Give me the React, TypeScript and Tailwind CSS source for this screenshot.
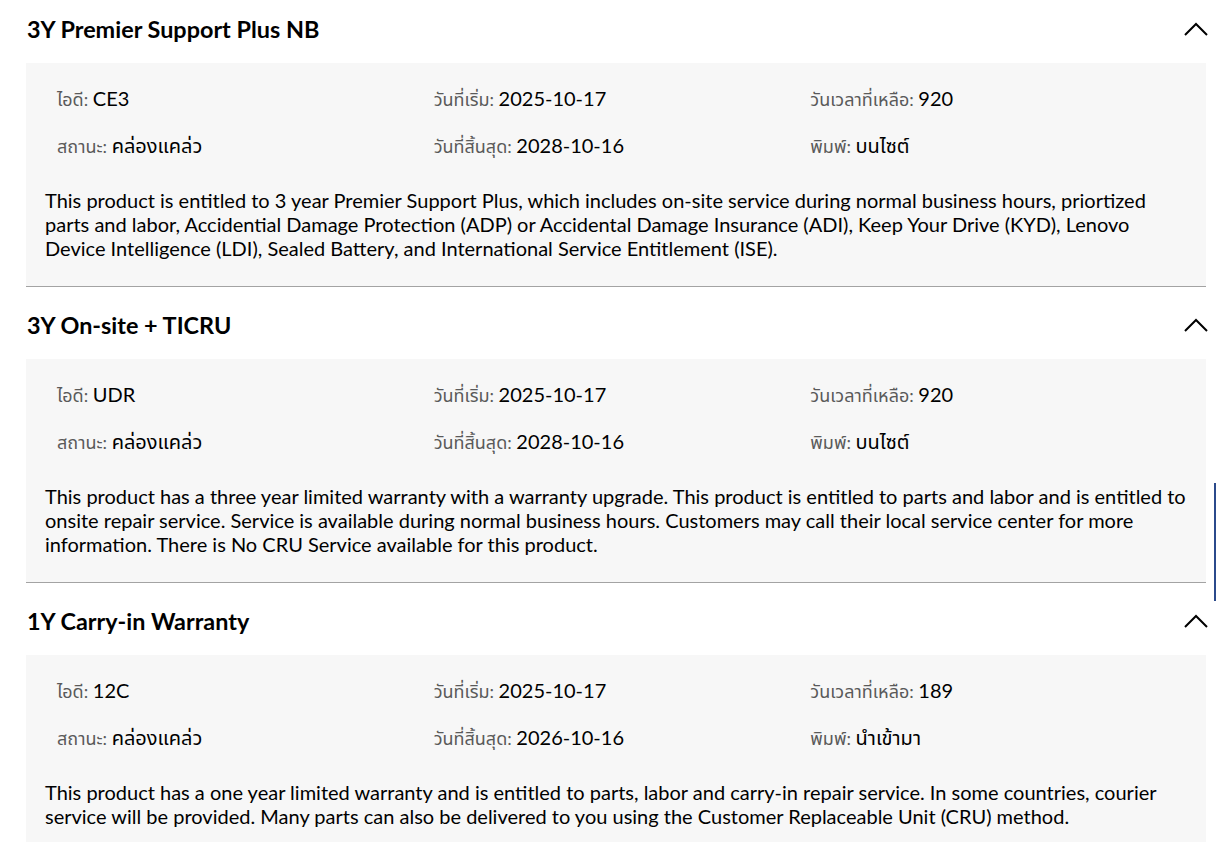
import React from "react";

type Item = {
  title: string;
  id: string;
  start: string;
  end: string;
  days: string;
  type: string;
  desc: string;
};

const items: Item[] = [
  {
    title: "3Y Premier Support Plus NB",
    id: "CE3",
    start: "2025-10-17",
    end: "2028-10-16",
    days: "920",
    type: "บนไซต์",
    desc: "This product is entitled to 3 year Premier Support Plus, which includes on-site service during normal business hours, priortized parts and labor, Accidential Damage Protection (ADP) or Accidental Damage Insurance (ADI), Keep Your Drive (KYD), Lenovo Device Intelligence (LDI), Sealed Battery, and International Service Entitlement (ISE).",
  },
  {
    title: "3Y On-site + TICRU",
    id: "UDR",
    start: "2025-10-17",
    end: "2028-10-16",
    days: "920",
    type: "บนไซต์",
    desc: "This product has a three year limited warranty with a warranty upgrade. This product is entitled to parts and labor and is entitled to onsite repair service. Service is available during normal business hours. Customers may call their local service center for more information. There is No CRU Service available for this product.",
  },
  {
    title: "1Y Carry-in Warranty",
    id: "12C",
    start: "2025-10-17",
    end: "2026-10-16",
    days: "189",
    type: "นำเข้ามา",
    desc: "This product has a one year limited warranty and is entitled to parts, labor and carry-in repair service. In some countries, courier service will be provided. Many parts can also be delivered to you using the Customer Replaceable Unit (CRU) method.",
  },
];

function Field({ label, value }: { label: string; value: string }) {
  return (
    <div className="flex h-[24px] items-baseline whitespace-nowrap">
      <span className="text-[18px] leading-[24px] text-[#5a5a5a]">{label}:&nbsp;</span>
      <span className="text-[20px] leading-[24px] text-black">{value}</span>
    </div>
  );
}

function Chevron() {
  return (
    <svg width="24" height="14" viewBox="0 0 24 14" fill="none">
      <polyline points="1,13 12,2 23,13" stroke="#000" strokeWidth="2" />
    </svg>
  );
}

function Section({ item, first }: { item: Item; first: boolean }) {
  return (
    <div className={first ? "" : "border-t border-[#a3a3a3]"}>
      <div className="flex items-center justify-between pl-[1px] pt-[24px] pb-[20px] -mr-[2px]">
        <h2 className="text-[23.4px] leading-[28px] font-bold text-black">{item.title}</h2>
        <Chevron />
      </div>
      <div className="bg-[#f7f7f7] px-[19px] pt-[23px] pb-[26px]">
        <div className="grid grid-cols-3 pl-3 gap-y-[23px]">
          <Field label="ไอดี" value={item.id} />
          <Field label="วันที่เริ่ม" value={item.start} />
          <Field label="วันเวลาที่เหลือ" value={item.days} />
          <Field label="สถานะ" value="คล่องแคล่ว" />
          <Field label="วันที่สิ้นสุด" value={item.end} />
          <Field label="พิมพ์" value={item.type} />
        </div>
        <p className="mt-[31px] text-[20px] leading-[24px] text-black">{item.desc}</p>
      </div>
    </div>
  );
}

export default function App() {
  return (
    <div
      className="relative h-[842px] overflow-hidden bg-white"
      style={{ fontFamily: '"Lato", "Noto Sans", "Noto Sans Thai", "Tahoma", sans-serif' }}
    >
      <div className="ml-[26px] mr-[11px] -mt-[9px]">
        {items.map((it, i) => (
          <Section key={it.title} item={it} first={i === 0} />
        ))}
      </div>
      <div className="absolute right-[1px] top-[483px] h-[118px] w-[2px] bg-[#2b4a8b]" />
    </div>
  );
}
